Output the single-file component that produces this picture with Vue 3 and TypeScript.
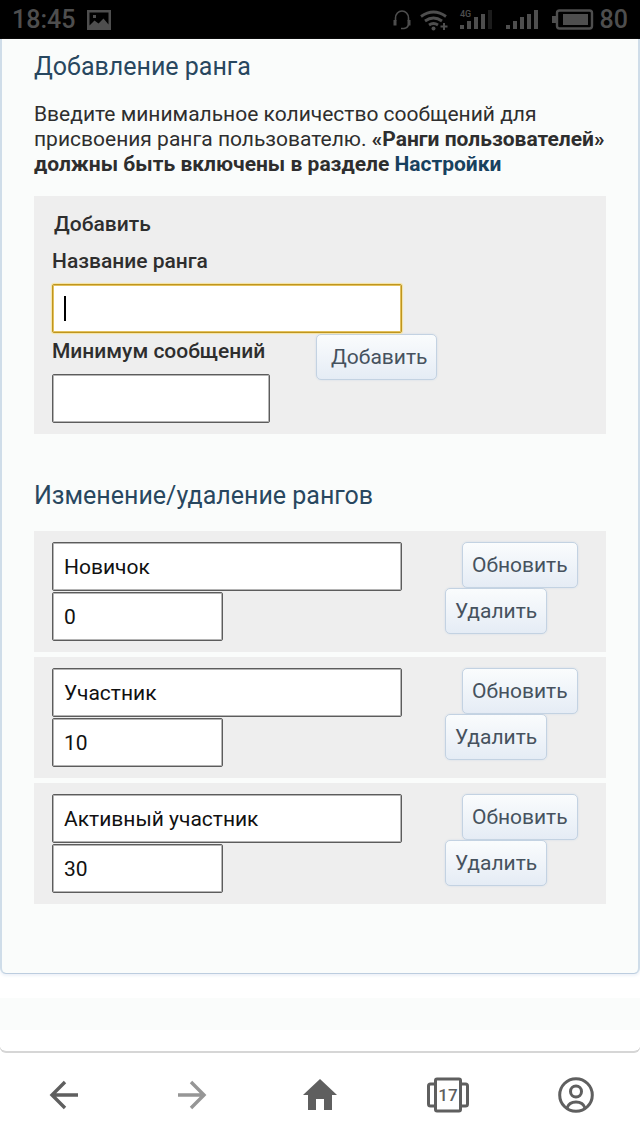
<script setup lang="ts">
import { ref } from 'vue'

interface Rank {
  id: number
  title: string
  minPosts: string
}

const newTitle = ref('')
const newMinPosts = ref('')
const ranks = ref<Rank[]>([
  { id: 1, title: 'Новичок', minPosts: '0' },
  { id: 2, title: 'Участник', minPosts: '10' },
  { id: 3, title: 'Активный участник', minPosts: '30' },
])

function addRank() {
  if (!newTitle.value) return
  ranks.value.push({ id: Date.now(), title: newTitle.value, minPosts: newMinPosts.value || '0' })
  newTitle.value = ''
  newMinPosts.value = ''
}

function removeRank(id: number) {
  ranks.value = ranks.value.filter((rank) => rank.id !== id)
}
</script>

<template>
  <div class="screen">
    <header class="status">
      <span class="clock">18:45</span>
      <svg class="picture" width="24" height="20" viewBox="0 0 24 20" aria-hidden="true">
        <path fill="#4e4e4e" fill-rule="evenodd" d="M0 0h24v20H0zM2.500 2.500v13l5-5 4 3 5-5 5 6V2.500zM6 5h3v3H6z" />
      </svg>
      <span class="spacer"></span>
      <svg class="signals" width="209" height="24" viewBox="0 0 209 24" aria-hidden="true">
        <g fill="none" stroke="#4e4e4e">
          <path stroke-width="1.600" d="M4.500 13V10a6.500 7 0 0 1 13 0v3M17.500 17q-1 3-4.500 3.500H10" />
          <path stroke-width="3" d="M4 12v5.500M18 12v5.500" />
          <path stroke-width="2.800" d="M30 8.500q12.500-9 25 0M34 13q8.500-6 17 0M38 17q4.500-3 9 0" />
          <path stroke-width="2" d="M53 15v7M49.500 18.500h7" />
          <rect x="166" y="2.500" width="35" height="18" rx="2.500" stroke-width="2.400" />
        </g>
        <g fill="#4e4e4e">
          <circle cx="42.500" cy="20.500" r="2" />
          <path d="M69 17h4v4h-4zM76 13h4v8h-4zM83 9h4v12h-4zM90 6h4v15h-4z" />
          <path d="M115 17h4v4h-4zM122 13h4v8h-4zM129 9h4v12h-4zM136 6h4v15h-4zM143 2h4v19h-4z" />
          <path d="M161 8h4v7h-4zM172 6h25v11h-25z" />
          <text x="69" y="9" class="network">4G</text>
        </g>
        <path fill="#1c1c1c" d="M97 2h4v19h-4z" />
      </svg>
      <span class="charge">80</span>
    </header>

    <div class="viewport">
      <main class="panel">
        <h2>Добавление ранга</h2>
        <p>
          Введите минимальное количество сообщений для присвоения ранга пользователю.
          <strong>«Ранги пользователей» должны быть включены в разделе</strong> <a href="#settings">Настройки</a>
        </p>

        <form class="box add" @submit.prevent="addRank">
          <h3>Добавить</h3>
          <label for="new-title">Название ранга</label>
          <div class="focus-field">
            <input id="new-title" v-model="newTitle" class="title focused" type="text" />
            <span v-if="!newTitle" class="caret"></span>
          </div>
          <div class="add-row">
            <div class="minimum">
              <label for="new-min">Минимум сообщений</label>
              <input id="new-min" v-model="newMinPosts" type="text" />
            </div>
            <button class="action submit" type="submit">Добавить</button>
          </div>
        </form>

        <h2 class="second">Изменение/удаление рангов</h2>
        <div class="ranks">
          <form v-for="rank in ranks" :key="rank.id" class="box rank" @submit.prevent>
            <div class="fields">
              <input v-model="rank.title" class="title" type="text" aria-label="Название ранга" />
              <input v-model="rank.minPosts" class="posts" type="text" aria-label="Минимум сообщений" />
            </div>
            <div class="actions">
              <button class="action update" type="submit">Обновить</button>
              <button class="action" type="button" @click="removeRank(rank.id)">Удалить</button>
            </div>
          </form>
        </div>
      </main>
      <div class="band"></div>
    </div>

    <nav class="toolbar">
      <button type="button" aria-label="Назад">
        <svg width="36" height="36" viewBox="0 0 36 36" fill="none" stroke="#5f5f5f" stroke-width="3.400">
          <path d="M32 18H6M19 5L6 18l13 13" />
        </svg>
      </button>
      <button type="button" aria-label="Вперёд">
        <svg width="36" height="36" viewBox="0 0 36 36" fill="none" stroke="#969696" stroke-width="3.400">
          <path d="M4 18h26M17 5l13 13-13 13" />
        </svg>
      </button>
      <button type="button" aria-label="Домой">
        <svg width="36" height="36" viewBox="0 0 36 36" fill="#5f5f5f">
          <path d="M18 2L1 18h5v15h8V22h8v11h8V18h5z" />
        </svg>
      </button>
      <button type="button" aria-label="Вкладки">
        <svg width="44" height="36" viewBox="0 0 44 36" fill="none" stroke="#5f5f5f" stroke-width="3">
          <rect x="9.500" y="2" width="25" height="32" rx="1.500" />
          <path d="M9 7H4.500Q2.500 7 2.500 9v18q0 2 2 2H9M35 7h4.500q2 0 2 2v18q0 2-2 2H35" />
          <text x="22" y="24" text-anchor="middle" class="tabs">17</text>
        </svg>
      </button>
      <button type="button" aria-label="Профиль">
        <svg width="36" height="36" viewBox="0 0 36 36" fill="none" stroke="#5f5f5f" stroke-width="3">
          <circle cx="18" cy="18" r="16.300" />
          <circle cx="18" cy="14.500" r="5.500" />
          <path d="M9 31q2-6 9-6t9 6" />
        </svg>
      </button>
    </nav>
  </div>
</template>

<style>
body {
  margin: 0;
  background: #fff;
}
</style>

<style scoped>
* {
  box-sizing: border-box;
}

.screen {
  display: flex;
  flex-direction: column;
  min-height: 100vh;
  background: #fff;
  color: #2e2e2e;
  font: 21px/25px Roboto, "Noto Sans", sans-serif;
}

.status {
  display: flex;
  align-items: center;
  height: 39px;
  padding: 0 12px;
  background: #000;
  color: #4e4e4e;
  font-size: 25px;
  font-weight: 500;
}

.picture {
  margin-left: 12px;
}

.spacer {
  flex: 1;
}

.network {
  font: 500 9px Roboto, sans-serif;
}

.viewport {
  flex: 1;
  background: linear-gradient(#fff, #fff) padding-box, #b5b5b5 border-box;
  border-bottom: 2px solid #d6d6d6;
  border-radius: 0 0 6px 6px;
  padding-bottom: 20px;
}

.panel {
  padding: 14px 32px 69px;
  background: #fafcfb;
  border: 2px solid #cfdde9;
  border-top: 0;
  border-bottom: 1px solid #bccddf;
  border-radius: 0 0 6px 6px;
  box-shadow: 0 2px 3px #eef2f8;
}

h2 {
  margin: 0;
  color: #28475f;
  font-size: 25px;
  font-weight: 400;
  line-height: 27px;
}

p {
  margin: 22px 0 19px;
}

strong,
p a {
  font-weight: 700;
}

a {
  color: #17415f;
  text-decoration: none;
}

.box {
  padding: 11px 18px;
  background: #eee;
}

.add {
  padding-top: 16px;
}

h3 {
  margin: 0 2px 12px;
  font-size: 21px;
  font-weight: 500;
  line-height: 25px;
}

label {
  display: block;
  margin-bottom: 10px;
  font-weight: 500;
}

input,
.action {
  font: 21px/25px Roboto, "Noto Sans", sans-serif;
}

input {
  display: block;
  width: 100%;
  height: 49px;
  margin: 0;
  padding: 0 11px;
  background: #fff;
  border: 1px solid #5c5c5c;
  border-radius: 2px;
  box-shadow: inset 0 0 0 1px #b4b4b4;
  color: #111;
  outline: 0;
}

.title {
  max-width: 350px;
}

.focus-field {
  position: relative;
}

.focused {
  border-color: #be9520;
  box-shadow: inset 0 0 0 1px #e3c05a, 0 0 1px 1px #f6e3a0;
}

.caret {
  position: absolute;
  top: 12px;
  left: 12px;
  width: 2px;
  height: 25px;
  background: #000;
}

.add-row {
  display: flex;
  align-items: flex-start;
  gap: 46px;
  padding-top: 1px;
}

.minimum {
  width: 218px;
  padding-top: 5px;
}

.action {
  height: 46px;
  padding: 0 9px;
  background: linear-gradient(#fafcfd, #e5ecf5);
  border: 1px solid #c3d2e2;
  border-radius: 5px;
  box-shadow: 0 0 2px #cfdae6;
  color: #46525e;
}

.submit {
  padding-left: 14px;
}

.second {
  margin: 48px 0 22px;
}

.ranks {
  display: grid;
  gap: 5px;
}

.rank {
  display: grid;
  grid-template-columns: minmax(0, 1fr) 143px;
}

.fields {
  display: grid;
  gap: 1px;
}

.posts {
  max-width: 171px;
}

.actions {
  display: flex;
  flex-direction: column;
  align-items: flex-start;
}

.update {
  margin-left: 17px;
}

.band {
  height: 32px;
  margin-top: 24px;
  background: #fafcfb;
}

.toolbar {
  display: grid;
  grid-template-columns: repeat(5, 1fr);
  height: 85px;
  padding-bottom: 2px;
}

.toolbar button {
  display: grid;
  place-items: center;
  padding: 0;
  border: 0;
  background: none;
}

.tabs {
  fill: #5f5f5f;
  stroke: none;
  font: 500 17px Roboto, sans-serif;
}
</style>
